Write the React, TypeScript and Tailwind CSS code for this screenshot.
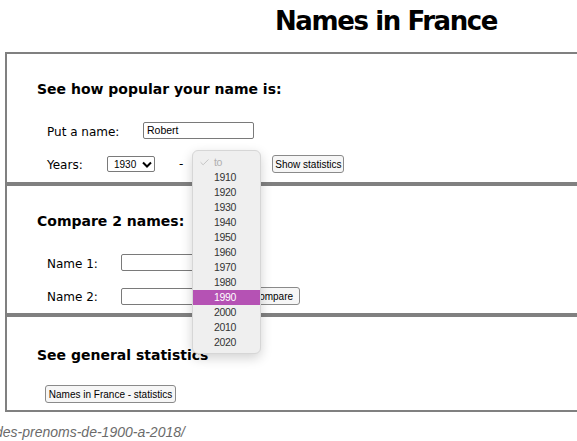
import { Check } from 'lucide-react';

const years = ['1910', '1920', '1930', '1940', '1950', '1960', '1970', '1980', '1990', '2000', '2010', '2020'];

function Btn({ label, className = '' }: { label: string; className?: string }) {
  return (
    <div
      className={`h-[18px] px-[5px] flex items-center justify-center border border-[#8a8a8a] rounded-[3px] bg-[#f6f6f6] text-[10px] text-black font-['Liberation_Sans',Arial,sans-serif] whitespace-nowrap ${className}`}
    >
      {label}
    </div>
  );
}

function Field({ value = '', className = '' }: { value?: string; className?: string }) {
  return (
    <div
      className={`h-[17px] border border-[#7a7a7a] rounded-[2px] bg-white pl-[3px] flex items-center text-[10.5px] text-black font-['Liberation_Sans',Arial,sans-serif] ${className}`}
    >
      {value}
    </div>
  );
}

function Heading({ children }: { children: string }) {
  return <h2 className="pl-[30px] text-[14px] leading-[17px] font-bold text-black">{children}</h2>;
}

function YearMenu() {
  return (
    <div className="absolute left-[192px] top-[150px] w-[69px] h-[204px] rounded-[6px] bg-[#efefef] border border-[#d6d6d6] shadow-[0_4px_12px_rgba(0,0,0,0.18)] pt-[4px] font-['Liberation_Sans',Arial,sans-serif] text-[10.5px] tracking-[-0.3px]">
      <div className="h-[15px] flex items-center text-[#b0b0b0]">
        <Check className="ml-[6px] w-[11px] h-[11px]" strokeWidth={1.5} />
        <span className="ml-[4px]">to</span>
      </div>
      {years.map(y => (
        <div
          key={y}
          className={`h-[15px] flex items-center pl-[21px] ${y === '1990' ? 'bg-[#b552b4] text-white' : 'text-[#333333]'}`}
        >
          {y}
        </div>
      ))}
    </div>
  );
}

export default function App() {
  return (
    <div className="relative w-[577px] h-[441px] overflow-hidden bg-white text-black font-['DejaVu_Sans',Verdana,sans-serif]">
      <h1 className="h-[52px] pt-[6px] pl-[275px] text-[26px] leading-[30px] font-bold tracking-[-1.4px] whitespace-nowrap">
        Names in France
      </h1>

      <div className="ml-[5px] w-[640px] border-l-2 border-t-2 border-b-2 border-[#808080]">
        {/* popularity */}
        <section className="h-[128px] pt-[27px]">
          <Heading>See how popular your name is:</Heading>
          <div className="mt-[24px] pl-[40px] flex items-center h-[17px]">
            <span className="w-[96px] text-[12px] leading-[14px] pt-[2px]">Put a name:</span>
            <Field value="Robert" className="w-[111px]" />
          </div>
          <div className="mt-[16px] pl-[40px] flex items-center h-[18px]">
            <span className="w-[60px] text-[12px] leading-[14px] pt-[1px]">Years:</span>
            <div className="w-[48px] h-[16px] border border-[#7a7a7a] rounded-[2px] flex items-center pl-[6px] text-[10px] font-['Liberation_Sans',Arial,sans-serif]">
              1930
              <svg className="ml-[6px] w-[10px] h-[7px]" viewBox="0 0 10 7" fill="none">
                <path d="M1 1.5 L5 5.5 L9 1.5" stroke="black" strokeWidth="2" />
              </svg>
            </div>
            <span className="ml-[24px] text-[12px]">-</span>
            <div className="ml-[10px] w-[58px] h-[15px] border border-[#7a7a7a] rounded-[2px]" />
            <Btn label="Show statistics" className="ml-[21px] w-[72px]" />
          </div>
        </section>
        <div className="h-[4px] bg-[#808080]" />

        {/* compare */}
        <section className="h-[127px] pt-[27px]">
          <Heading>Compare 2 names:</Heading>
          <div className="mt-[24px] pl-[40px] flex items-center h-[17px]">
            <span className="w-[74px] text-[12px] leading-[14px] pt-[2px]">Name 1:</span>
            <Field className="w-[120px]" />
          </div>
          <div className="mt-[16px] pl-[40px] flex items-center h-[18px]">
            <span className="w-[74px] text-[12px] leading-[14px] pt-[2px]">Name 2:</span>
            <Field className="w-[120px]" />
            <Btn label="Compare" className="ml-[4px] w-[55px]" />
          </div>
        </section>
        <div className="h-[4px] bg-[#808080]" />

        {/* general */}
        <section className="h-[93px] pt-[30px]">
          <Heading>See general statistics</Heading>
          <div className="mt-[21px] pl-[38px] flex">
            <Btn label="Names in France - statistics" className="w-[131px]" />
          </div>
        </section>
      </div>

      <p className="mt-[12px] ml-[-5px] text-[14px] leading-[16px] italic text-[#6b6b6b] font-['Liberation_Sans',Arial,sans-serif] whitespace-nowrap">
        des-prenoms-de-1900-a-2018/
      </p>

      <YearMenu />
    </div>
  );
}
